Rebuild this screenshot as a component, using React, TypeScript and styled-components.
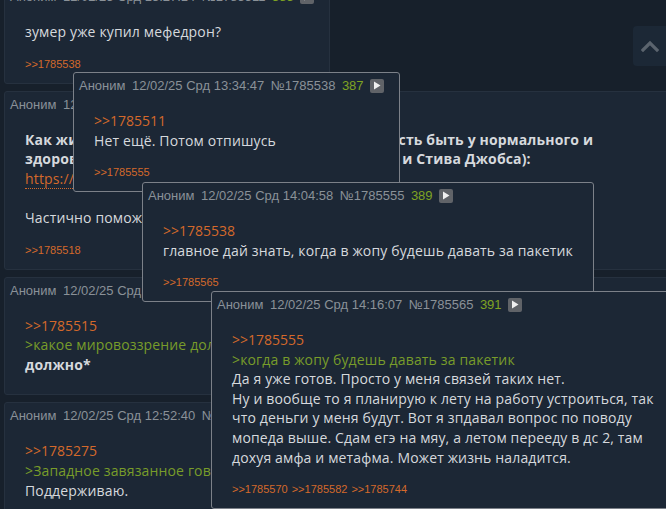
import React from "react";
import styled, { createGlobalStyle } from "styled-components";

const Global = createGlobalStyle`
  html, body {
    margin: 0;
    padding: 0;
    background: #17202b;
    overflow: hidden;
  }
  body {
    font-family: "Liberation Sans", Arial, sans-serif;
  }
`;

const Page = styled.div`
  position: relative;
  width: 666px;
  height: 509px;
  overflow: hidden;
  background: #17202b;
`;

const Thread = styled.div`
  display: flex;
  flex-direction: column;
  align-items: flex-start;
  gap: 7px;
  padding-left: 4px;
  margin-top: -17px;
`;

const PostBox = styled.div<{ $wide?: boolean }>`
  box-sizing: border-box;
  width: ${(p) => (p.$wide ? "700px" : "auto")};
  background: #1c2735;
  border: 1px solid #26313f;
  border-radius: 3px;
`;

const Popup = styled(PostBox)<{ $x: number; $y: number }>`
  position: absolute;
  left: ${(p) => p.$x}px;
  top: ${(p) => p.$y}px;
  border-color: #7c8189;
`;

const Header = styled.div`
  display: flex;
  align-items: center;
  gap: 6.5px;
  height: 17px;
  padding: 4px 15px 0 5px;
  font-size: 13px;
  line-height: 17px;
  color: #8a9198;
  white-space: nowrap;
`;

const Count = styled.span`
  color: #7fa323;
`;

const PlayButton = styled.span`
  display: inline-flex;
  align-items: center;
  justify-content: center;
  width: 14px;
  height: 14px;
  border-radius: 2px;
  background: #606368;
`;

const Body = styled.div<{ $replies?: boolean }>`
  padding: 17px 20px ${(p) => (p.$replies ? "11px" : "20px")} 20px;
`;

const Message = styled.div`
  font-family: "Open Sans", "Liberation Sans", sans-serif;
  font-size: 14px;
  letter-spacing: 0.15px;
  line-height: 19.6px;
  color: #d6d9dd;
  white-space: nowrap;
`;

const Line = styled.div<{ $tone?: "ref" | "green" | "bold" }>`
  color: ${(p) =>
    p.$tone === "ref" ? "#d4692b" : p.$tone === "green" ? "#789c2a" : "inherit"};
  font-weight: ${(p) => (p.$tone === "bold" ? 700 : 400)};
  letter-spacing: ${(p) => (p.$tone === "ref" ? "0" : "inherit")};
  min-height: 19.6px;
`;

const Link = styled.span`
  color: #d4692b;
  border-bottom: 1px dotted #d4692b;
`;

const Replies = styled.div`
  display: flex;
  gap: 4px;
  margin-top: 14px;
  font-size: 11px;
  line-height: 16px;
  color: #d4692b;
  white-space: nowrap;
`;

const UpButton = styled.div`
  position: fixed;
  top: 26px;
  right: 0;
  width: 33px;
  height: 40px;
  display: flex;
  align-items: center;
  justify-content: center;
  background: #1c2836;
  border-radius: 4px 0 0 4px;
`;

type PostData = {
  date: string;
  num: string;
  count?: string;
};

const PostHeader: React.FC<PostData> = ({ date, num, count }) => (
  <Header>
    <span>Аноним</span>
    <span>{date}</span>
    <span>№{num}</span>
    <Count>{count}</Count>
    <PlayButton>
      <svg width="8" height="9" viewBox="0 0 8 9">
        <path d="M1 0.5 L7.5 4.5 L1 8.5 Z" fill="#f0f0f0" />
      </svg>
    </PlayButton>
  </Header>
);

const ReplyList: React.FC<{ refs: string[] }> = ({ refs }) => (
  <Replies>
    {refs.map((r) => (
      <span key={r}>&gt;&gt;{r}</span>
    ))}
  </Replies>
);

export default function App() {
  return (
    <Page>
      <Global />
      <Thread>
        <PostBox>
          <PostHeader date="12/02/25 Срд 13:27:14" num="1785511" count="385" />
          <Body $replies>
            <Message>
              <Line>зумер уже купил мефедрон?</Line>
            </Message>
            <ReplyList refs={["1785538"]} />
          </Body>
        </PostBox>

        <PostBox $wide>
          <PostHeader date="12/02/25 Срд 13:02:31" num="1785508" count="384" />
          <Body $replies>
            <Message>
              <Line $tone="bold">
                Как жить, если у тебя нет ни малейшей вероятность быть у нормального и
              </Line>
              <Line $tone="bold">
                здорового человека (как это было у Билла Гейтса и Стива Джобса):
              </Line>
              <Line>
                <Link>https://youtu.be/dQw4w9WgXcQ</Link>
              </Line>
              <Line />
              <Line>Частично поможет только стоицизм.</Line>
            </Message>
            <ReplyList refs={["1785518"]} />
          </Body>
        </PostBox>

        <PostBox $wide>
          <PostHeader date="12/02/25 Срд 12:49:05" num="1785521" count="386" />
          <Body>
            <Message>
              <Line $tone="ref">&gt;&gt;1785515</Line>
              <Line $tone="green">&gt;какое мировоззрение должно быть</Line>
              <Line $tone="bold">должно*</Line>
            </Message>
          </Body>
        </PostBox>

        <PostBox $wide>
          <PostHeader date="12/02/25 Срд 12:52:40" num="1785530" count="386" />
          <Body>
            <Message>
              <Line $tone="ref">&gt;&gt;1785275</Line>
              <Line $tone="green">&gt;Западное завязанное говно</Line>
              <Line>Поддерживаю.</Line>
            </Message>
          </Body>
        </PostBox>
      </Thread>

      <Popup $x={73} $y={72}>
        <PostHeader date="12/02/25 Срд 13:34:47" num="1785538" count="387" />
        <Body $replies>
          <Message>
            <Line $tone="ref">&gt;&gt;1785511</Line>
            <Line>Нет ещё. Потом отпишусь</Line>
          </Message>
          <ReplyList refs={["1785555"]} />
        </Body>
      </Popup>

      <Popup $x={142} $y={182}>
        <PostHeader date="12/02/25 Срд 14:04:58" num="1785555" count="389" />
        <Body $replies>
          <Message>
            <Line $tone="ref">&gt;&gt;1785538</Line>
            <Line>главное дай знать, когда в жопу будешь давать за пакетик</Line>
          </Message>
          <ReplyList refs={["1785565"]} />
        </Body>
      </Popup>

      <Popup $x={211} $y={291}>
        <PostHeader date="12/02/25 Срд 14:16:07" num="1785565" count="391" />
        <Body $replies>
          <Message>
            <Line $tone="ref">&gt;&gt;1785555</Line>
            <Line $tone="green">&gt;когда в жопу будешь давать за пакетик</Line>
            <Line>Да я уже готов. Просто у меня связей таких нет.</Line>
            <Line>Ну и вообще то я планирую к лету на работу устроиться, так</Line>
            <Line>что деньги у меня будут. Вот я зпдавал вопрос по поводу</Line>
            <Line>мопеда выше. Сдам егэ на мяу, а летом перееду в дс 2, там</Line>
            <Line>дохуя амфа и метафма. Может жизнь наладится.</Line>
          </Message>
          <ReplyList refs={["1785570", "1785582", "1785744"]} />
        </Body>
      </Popup>

      <UpButton>
        <svg width="18" height="12" viewBox="0 0 18 12">
          <path
            d="M2 10 L9 3 L16 10"
            fill="none"
            stroke="#5b646e"
            strokeWidth="3.2"
            strokeLinecap="square"
          />
        </svg>
      </UpButton>
    </Page>
  );
}
